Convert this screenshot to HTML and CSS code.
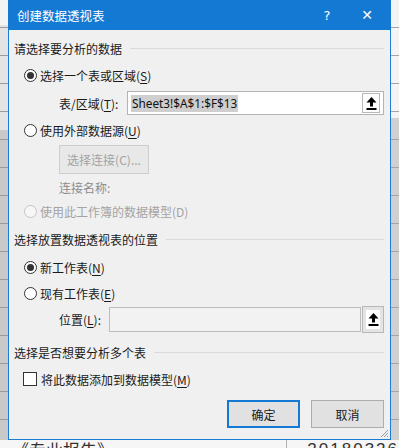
FILE: index.html
```html
<!DOCTYPE html>
<html lang="zh-CN">
<head>
  <meta charset="UTF-8" />
  <title>创建数据透视表</title>
  <meta name="viewport" content="width=device-width, initial-scale=1.0" />
  <link rel="stylesheet" href="styles.css">
</head>
<body>

  <div class="escritorio">
    <div class="hoja hoja-izq"></div>

    <div class="dialogo">
      <div class="titulo">
        <span class="titulo-texto">创建数据透视表</span>
        <span class="titulo-ayuda">?</span>
        <span class="titulo-cerrar">✕</span>
      </div>

      <div class="cuerpo">
        <div class="seccion seccion-1">
          <span>请选择要分析的数据</span>
        </div>

        <label class="opcion opcion-1">
          <span class="radio marcado"></span>
          <span>选择一个表或区域(<u>S</u>)</span>
        </label>

        <div class="campo campo-tabla">
          <span class="campo-etiqueta">表/区域(<u>T</u>):</span>
          <div class="entrada">
            <span class="seleccion">Sheet3!$A$1:$F$13</span>
            <span class="boton-rango">
              <svg width="11" height="13" viewBox="0 0 11 13">
                <path d="M5.5 0 L10.5 5.5 H7 V9.5 H4 V5.5 H0.5 Z" fill="#000" />
                <rect x="0.5" y="11" width="10" height="2" fill="#000" />
              </svg>
            </span>
          </div>
        </div>

        <label class="opcion opcion-2">
          <span class="radio"></span>
          <span>使用外部数据源(<u>U</u>)</span>
        </label>

        <div class="conexion">
          <span class="boton-conexion">选择连接(C)...</span>
        </div>

        <div class="nombre-conexion">连接名称:</div>

        <label class="opcion opcion-3 apagado">
          <span class="radio"></span>
          <span>使用此工作簿的数据模型(D)</span>
        </label>

        <div class="seccion seccion-2">
          <span>选择放置数据透视表的位置</span>
        </div>

        <label class="opcion opcion-4">
          <span class="radio marcado"></span>
          <span>新工作表(<u>N</u>)</span>
        </label>

        <label class="opcion opcion-5">
          <span class="radio"></span>
          <span>现有工作表(<u>E</u>)</span>
        </label>

        <div class="campo campo-ubicacion">
          <span class="campo-etiqueta">位置(<u>L</u>):</span>
          <div class="entrada entrada-apagada"></div>
          <span class="boton-rango boton-suelto">
            <svg width="11" height="13" viewBox="0 0 11 13">
              <path d="M5.5 0 L10.5 5.5 H7 V9.5 H4 V5.5 H0.5 Z" fill="#000" />
              <rect x="0.5" y="11" width="10" height="2" fill="#000" />
            </svg>
          </span>
        </div>

        <div class="seccion seccion-3">
          <span>选择是否想要分析多个表</span>
        </div>

        <label class="opcion opcion-6">
          <span class="casilla"></span>
          <span>将此数据添加到数据模型(<u>M</u>)</span>
        </label>

        <div class="acciones">
          <span class="boton boton-ok">确定</span>
          <span class="boton">取消</span>
        </div>
      </div>

      <svg class="agarre" width="9" height="9" viewBox="0 0 9 9">
        <path d="M8 1 L1 8 M8 4 L4 8 M8 7 L7 8" stroke="#9a9a9a" stroke-width="1" />
      </svg>
    </div>

    <div class="hoja hoja-der"></div>
  </div>

  <div class="fila-hoja">
    <span class="fila-texto">《专业报告》</span>
    <span class="fila-num">20180326</span>
  </div>

</body>
</html>
```

FILE: styles.css
```css
body {
  margin: 0;
  padding: 0;
  width: 399px;
  height: 448px;
  overflow: hidden;
  background: #ececec;
  font-family: "Noto Sans CJK SC", "Microsoft YaHei", sans-serif;
  font-size: 12px;
  color: #1a1a1a;
}

.escritorio {
  display: flex;
  height: 440px;
}

.hoja {
  width: 8px;
  flex: none;
}

.hoja-izq {
  background:
    repeating-linear-gradient(180deg, transparent 0, transparent 27px, #9a9a9a 27px, #9a9a9a 28px),
    linear-gradient(180deg, #f4f4f4 0, #f4f4f4 25px, #e4e4e4 25px, #e4e4e4 130px, #c9c9c9 130px);
}

.hoja-der {
  background:
    repeating-linear-gradient(180deg, transparent 0, transparent 27px, #a4a4a4 27px, #a4a4a4 28px),
    linear-gradient(180deg, #f4f4f4 0, #f4f4f4 118px, #d0d0d0 118px);
}

.dialogo {
  position: relative;
  width: 383px;
  flex: none;
  box-sizing: border-box;
  border: 1px solid #1a7fd4;
  background: #f0f0f0;
  display: flex;
  flex-direction: column;
}

.titulo {
  height: 30px;
  margin: -1px -1px 0;
  background: #1479d2;
  color: #fff;
  display: flex;
  align-items: center;
  font-size: 12.5px;
}

.titulo-texto {
  padding-left: 9px;
  flex: 1;
}

.titulo-ayuda {
  width: 20px;
  font-family: "DejaVu Sans", sans-serif;
  font-size: 13px;
  text-align: center;
}

.titulo-cerrar {
  width: 48px;
  margin-left: 6px;
  font-family: "DejaVu Sans", sans-serif;
  font-size: 14px;
  text-align: center;
}

.cuerpo {
  padding: 9px 6px 0 5px;
}

.seccion {
  height: 18px;
  display: flex;
  align-items: center;
  gap: 8px;
}

.seccion::after {
  content: "";
  flex: 1;
  border-top: 1px solid #dadada;
}

.seccion-2 { margin-top: 10px; }
.seccion-3 { margin-top: 11px; }

.opcion {
  height: 18px;
  display: flex;
  align-items: center;
  gap: 3px;
  padding-left: 10px;
}

.opcion u { text-decoration-thickness: 1px; text-underline-offset: 2px; }

.opcion-1 { margin-top: 9px; }
.opcion-2 { margin-top: 6px; }
.opcion-3 { margin-top: 6px; }
.opcion-4 { margin-top: 10px; }
.opcion-5 { margin-top: 8px; }
.opcion-6 { margin-top: 9px; padding-left: 9px; }

.apagado { color: #a3a3a3; }

.radio {
  width: 13px;
  height: 13px;
  box-sizing: border-box;
  border: 1px solid #333;
  border-radius: 50%;
  background: #fff;
  display: flex;
  align-items: center;
  justify-content: center;
}

.radio.marcado::after {
  content: "";
  width: 7px;
  height: 7px;
  border-radius: 50%;
  background: #333;
}

.apagado .radio {
  border-color: #c4c4c4;
  background: #f7f7f7;
}

.casilla {
  width: 14px;
  height: 14px;
  box-sizing: border-box;
  border: 1px solid #333;
  background: #fff;
  margin-right: 1px;
}

.campo {
  display: flex;
  align-items: center;
  padding-left: 45px;
}

.campo-tabla {
  margin-top: 7px;
  height: 24px;
}

.campo-ubicacion {
  margin-top: 5px;
  height: 25px;
}

.campo-etiqueta {
  width: 68px;
}

.campo-ubicacion .campo-etiqueta {
  width: 50px;
}

.campo u { text-underline-offset: 2px; }

.entrada {
  flex: 1;
  height: 24px;
  box-sizing: border-box;
  border: 1px solid #b4b4b4;
  background: #fff;
  display: flex;
  align-items: center;
  padding-left: 3px;
}

.seleccion {
  font-family: "Noto Sans", "Liberation Sans", sans-serif;
  font-size: 11.8px;
  background: #cfcfcf;
  color: #111;
  line-height: 17px;
  padding: 0 1px;
}

.boton-rango {
  margin-left: auto;
  margin-right: 3px;
  width: 18px;
  height: 20px;
  box-sizing: border-box;
  border: 1px solid #b8b8b8;
  background: #fdfdfd;
  display: flex;
  align-items: center;
  justify-content: center;
}

.entrada-apagada {
  height: 25px;
  background: #f2f2f2;
  border-color: #bdbdbd;
}

.boton-suelto {
  margin: 0 0 0 1px;
  width: 22px;
  height: 27px;
  border-color: #b8b8b8;
  background: #e4e4e4;
  box-shadow: inset 0 0 0 3px #e4e4e4, inset 0 0 0 10px #fff;
}

.conexion {
  margin-top: 6px;
  padding-left: 45px;
  display: flex;
}

.boton-conexion {
  width: 90px;
  height: 29px;
  box-sizing: border-box;
  border: 1px solid #cdcdcd;
  background: #e8e8e8;
  color: #a3a3a3;
  display: flex;
  align-items: center;
  justify-content: center;
}

.nombre-conexion {
  margin-top: 6px;
  height: 16px;
  line-height: 16px;
  padding-left: 45px;
  color: #8c8c8c;
}

.acciones {
  margin-top: 12px;
  display: flex;
  justify-content: flex-end;
  gap: 11px;
  padding-right: 0;
}

.boton {
  width: 73px;
  height: 28px;
  box-sizing: border-box;
  border: 1px solid #adadad;
  background: #e1e1e1;
  display: flex;
  align-items: center;
  justify-content: center;
}

.boton-ok {
  border: 2px solid #1479d2;
}

.agarre {
  position: absolute;
  right: 1px;
  bottom: 1px;
}

.fila-hoja {
  height: 8px;
  overflow: hidden;
  background: #f6f6f6;
  display: flex;
  font-size: 17px;
  line-height: 20px;
  color: #333;
}

.fila-texto {
  padding-left: 12px;
  width: 278px;
  border-right: 1px solid #b0b0b0;
}

.fila-num {
  padding-left: 20px;
  font-family: "Liberation Sans", sans-serif;
  letter-spacing: 2px;
}
```
